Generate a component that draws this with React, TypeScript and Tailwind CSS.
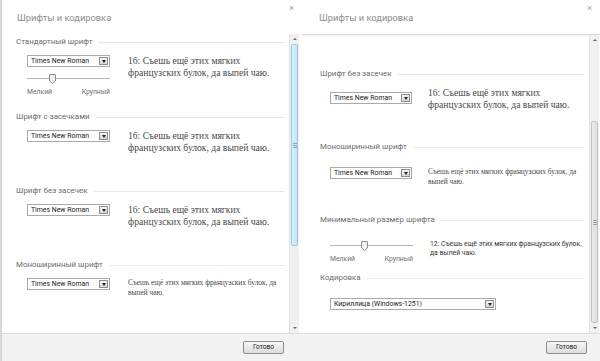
import React from 'react';

const ui = "font-['Roboto','Open_Sans',sans-serif]";
const serif = "font-['Liberation_Serif','Times_New_Roman',serif]";

function SectionLabel({ children }: { children: React.ReactNode }) {
  return (
    <div className="flex items-center gap-[6px] h-[12px]">
      <span className="text-[7.9px] leading-none text-[#6b6b6b] whitespace-nowrap">{children}</span>
      <div className="flex-1 h-px bg-[#e8e8e8]" />
    </div>
  );
}

function Select({ value, className }: { value: string; className: string }) {
  return (
    <div className={`flex items-center h-[12px] border border-[#a9a9a9] bg-white pl-[3px] pr-[1px] shrink-0 ${className}`}>
      <span className="flex-1 text-[6.9px] leading-none text-[#222] whitespace-nowrap overflow-hidden">{value}</span>
      <div className="w-[9px] h-[8px] border border-[#8e8e8e] bg-gradient-to-b from-[#f6f6f6] to-[#d6d6d6] flex items-center justify-center">
        <div className="w-0 h-0 border-l-[2px] border-r-[2px] border-t-[3px] border-l-transparent border-r-transparent border-t-[#222]" />
      </div>
    </div>
  );
}

function Slider({ thumbLeft }: { thumbLeft: 'left' | 'right' }) {
  return (
    <div className="w-[83px]">
      <div className="relative h-[10px] flex items-center">
        <div className="w-full h-[2px] border-t border-[#b5b5b5] border-b border-b-white bg-[#e4e4e4]" />
        <svg
          className={`absolute top-0 ${thumbLeft === 'left' ? 'left-[22px]' : 'left-[31px]'}`}
          width="7"
          height="10"
          viewBox="0 0 7 10"
        >
          <path d="M0.5 1 Q0.5 0.5 1 0.5 H6 Q6.5 0.5 6.5 1 V7 L3.5 9.5 L0.5 7 Z" fill="#f1f1f1" stroke="#8a8a8a" />
        </svg>
      </div>
      <div className="flex justify-between mt-[3px] text-[6.8px] leading-[10px] text-[#707070]">
        <span>Мелкий</span>
        <span>Крупный</span>
      </div>
    </div>
  );
}

function Sample16() {
  return (
    <div className={`${serif} text-[9.6px] leading-[12px] text-[#484848] whitespace-nowrap`}>
      16: Съешь ещё этих мягких
      <br />
      французских булок, да выпей чаю.
    </div>
  );
}

function SampleMono() {
  return (
    <div className={`${serif} text-[7.4px] leading-[10px] text-[#484848] whitespace-nowrap`}>
      Съешь ещё этих мягких французских булок, да
      <br />
      выпей чаю.
    </div>
  );
}

function Scrollbar({ active }: { active: boolean }) {
  return (
    <div className="w-[10px] flex flex-col bg-[#f0f0f0] border-l border-[#e2e2e2]">
      <div className="h-[10px] flex items-center justify-center">
        <div className="w-0 h-0 border-l-[2px] border-r-[2px] border-b-[2px] border-l-transparent border-r-transparent border-b-[#666]" />
      </div>
      <div className={`flex-1 flex flex-col ${active ? 'justify-start' : 'justify-end'}`}>
        <div
          className={`h-[202px] mx-[1px] rounded-[2px] border flex flex-col items-center justify-center gap-px ${
            active
              ? 'border-[#9cc8e8] bg-gradient-to-r from-[#dcf0fc] to-[#c3e3f6]'
              : 'border-[#c4c4c4] bg-gradient-to-r from-[#ececec] to-[#dedede]'
          }`}
        >
          <div className={`w-[4px] h-px ${active ? 'bg-[#7aa8cc]' : 'bg-[#9a9a9a]'}`} />
          <div className={`w-[4px] h-px ${active ? 'bg-[#7aa8cc]' : 'bg-[#9a9a9a]'}`} />
          <div className={`w-[4px] h-px ${active ? 'bg-[#7aa8cc]' : 'bg-[#9a9a9a]'}`} />
        </div>
      </div>
      <div className="h-[10px] flex items-center justify-center">
        <div className="w-0 h-0 border-l-[2px] border-r-[2px] border-t-[2px] border-l-transparent border-r-transparent border-t-[#666]" />
      </div>
    </div>
  );
}

function Header({ pl }: { pl: string }) {
  return (
    <div className={`h-[34px] flex justify-between shrink-0 ${pl}`}>
      <div className="pt-[11px] text-[9.3px] leading-[14px] text-[#8c8c8c]">Шрифты и кодировка</div>
      <div className="pt-[2px] pr-[8px] text-[9px] leading-[12px] text-[#9a9a9a]">×</div>
    </div>
  );
}

function Footer({ pr }: { pr: string }) {
  return (
    <div className={`h-[28px] shrink-0 border-t border-[#dcdcdc] bg-[#f2f2f2] flex items-center justify-end ${pr}`}>
      <button className="w-[41px] h-[13px] rounded-[2px] border border-[#8d8d8d] bg-gradient-to-b from-[#f7f7f7] to-[#dcdcdc] text-[6.6px] leading-none text-[#222]">
        Готово
      </button>
    </div>
  );
}

function LeftPanel() {
  return (
    <div className="w-[302px] h-[361px] flex flex-col bg-white border-l-2 border-[#d8d8d8]">
      <Header pl="pl-[15px]" />
      <div className="flex-1 flex min-h-0 pr-[3px]">
        <div className="flex-1 pl-[14px] pr-[4px] pt-[2px] overflow-hidden">
          <div className="h-[75px]">
            <SectionLabel>Стандартный шрифт</SectionLabel>
            <div className="flex items-start mt-[7px] pl-[11px] gap-[18px]">
              <div>
                <Select value="Times New Roman" className="w-[83px]" />
                <div className="mt-[7px]">
                  <Slider thumbLeft="left" />
                </div>
              </div>
              <Sample16 />
            </div>
          </div>
          <div className="h-[74px]">
            <SectionLabel>Шрифт с засечками</SectionLabel>
            <div className="flex items-start mt-[7px] pl-[11px] gap-[18px]">
              <Select value="Times New Roman" className="w-[83px]" />
              <Sample16 />
            </div>
          </div>
          <div className="h-[74px]">
            <SectionLabel>Шрифт без засечек</SectionLabel>
            <div className="flex items-start mt-[7px] pl-[11px] gap-[18px]">
              <Select value="Times New Roman" className="w-[83px]" />
              <Sample16 />
            </div>
          </div>
          <div className="h-[74px]">
            <SectionLabel>Моноширинный шрифт</SectionLabel>
            <div className="flex items-start mt-[7px] pl-[11px] gap-[18px]">
              <Select value="Times New Roman" className="w-[83px]" />
              <SampleMono />
            </div>
          </div>
        </div>
        <Scrollbar active />
      </div>
      <Footer pr="pr-[18px]" />
    </div>
  );
}

function RightPanel() {
  return (
    <div className="w-[298px] h-[361px] flex flex-col bg-white">
      <Header pl="pl-[17px]" />
      <div className="flex-1 flex min-h-0 border-t border-[#d6d6d6] shadow-[inset_0_1px_2px_rgba(0,0,0,0.06)] pr-[1px]">
        <div className="flex-1 pl-[18px] pr-[5px] pt-[33px] overflow-hidden">
          <div className="h-[73px]">
            <SectionLabel>Шрифт без засечек</SectionLabel>
            <div className="flex items-start mt-[7px] pl-[10px] gap-[16px]">
              <div className="pt-[5px]">
                <Select value="Times New Roman" className="w-[82px]" />
              </div>
              <Sample16 />
            </div>
          </div>
          <div className="h-[73px]">
            <SectionLabel>Моноширинный шрифт</SectionLabel>
            <div className="flex items-start mt-[14px] pl-[10px] gap-[16px]">
              <Select value="Times New Roman" className="w-[82px]" />
              <SampleMono />
            </div>
          </div>
          <div className="h-[58px]">
            <SectionLabel>Минимальный размер шрифта</SectionLabel>
            <div className="flex items-start mt-[15px] pl-[10px] gap-[17px]">
              <Slider thumbLeft="right" />
              <div className="-mt-[1px] text-[6.8px] leading-[9px] text-[#333] whitespace-nowrap">
                12: Съешь ещё этих мягких французских булок,
                <br />
                да выпей чаю.
              </div>
            </div>
          </div>
          <div>
            <SectionLabel>Кодировка</SectionLabel>
            <div className="mt-[14px] pl-[10px]">
              <Select value="Кириллица (Windows-1251)" className="w-[166px]" />
            </div>
          </div>
        </div>
        <Scrollbar active={false} />
      </div>
      <Footer pr="pr-[13px]" />
    </div>
  );
}

export default function App() {
  return (
    <div className={`${ui} w-[600px] h-[361px] flex bg-white overflow-hidden`}>
      <LeftPanel />
      <RightPanel />
    </div>
  );
}
